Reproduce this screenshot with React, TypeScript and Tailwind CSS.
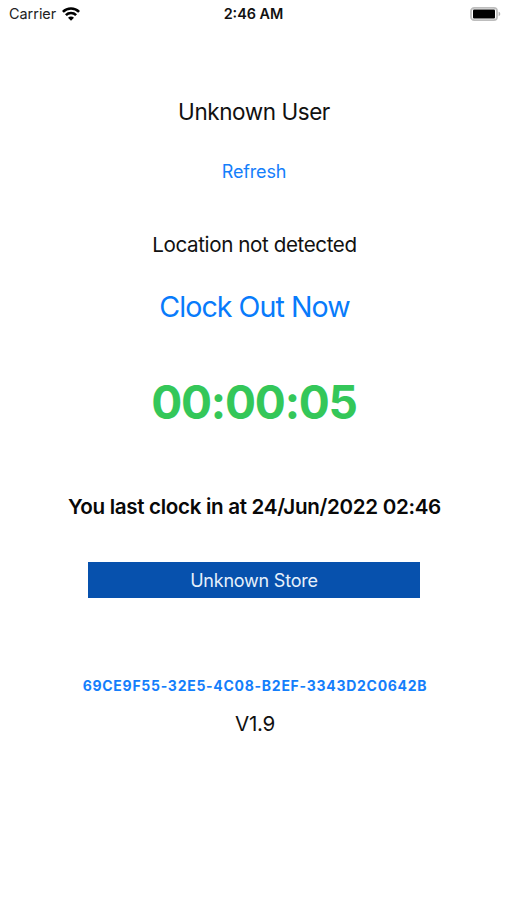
const LAST_CLOCK_IN = "24/Jun/2022 02:46";
const DEVICE_ID = "69CE9F55-32E5-4C08-B2EF-3343D2C0642B";

function WifiIcon() {
  return (
    <svg width="18" height="14" viewBox="0 0 18 14" fill="none" stroke="#000" strokeWidth="2.6">
      <path d="M0.9 4.9C5.4 0.4 12.6 0.4 17.1 4.9" />
      <path d="M3.9 8.1C6.7 5.3 11.3 5.3 14.1 8.1" />
      <path d="M9 13.8L6 10.8C7.7 9.1 10.3 9.1 12 10.8Z" fill="#000" stroke="none" />
    </svg>
  );
}

function BatteryIcon() {
  return (
    <svg width="31" height="14" viewBox="0 0 31 14" fill="none">
      <rect x="1" y="0.9" width="26" height="12.2" rx="3.2" stroke="#bdbdbd" strokeWidth="1.8" />
      <rect x="3" y="2.6" width="22" height="8.8" rx="1" fill="#000" />
      <path d="M28.6 4.8C30.8 5.4 30.8 8.6 28.6 9.2Z" fill="#b3b3b3" />
    </svg>
  );
}

function StatusBar() {
  return (
    <div className="grid h-7 grid-cols-3 items-center pr-1.5 pl-[9px] text-[14.4px] leading-7 text-[#222]">
      <div className="flex items-center gap-1.5">
        <span>Carrier</span>
        <WifiIcon />
      </div>
      <div className="pr-[3px] text-center font-semibold text-[#111]">2:46 AM</div>
      <div className="flex justify-end">
        <BatteryIcon />
      </div>
    </div>
  );
}

export default function App() {
  return (
    <div className="h-[900px] w-full overflow-hidden bg-white font-['Inter','Liberation_Sans',sans-serif] whitespace-nowrap text-[#111]">
      <StatusBar />

      <main className="flex flex-col items-center pl-px">
        <h1 className="mt-[68px] text-[22.5px] leading-8 tracking-[-0.43px]">Unknown User</h1>
        <button className="mt-8 text-[18px] leading-6 tracking-[-0.15px] text-[#147efb]">Refresh</button>

        <p className="mt-[45px] pl-px text-[20.6px] leading-8 tracking-[-0.4px]">Location not detected</p>
        <button className="mt-[26px] pl-px text-[28.6px] leading-10 tracking-[-0.95px] text-[#087bfb]">
          Clock Out Now
        </button>

        <div className="mt-[45px] text-[46px] leading-[60px] font-bold tracking-[-1.2px] text-[#34c759]">
          00:00:05
        </div>

        <p className="mt-[59px] pl-px text-[20.6px] leading-8 font-semibold tracking-[-0.32px] text-[#080808]">
          You last clock in at {LAST_CLOCK_IN}
        </p>

        <button className="mt-[39px] h-9 w-[332px] bg-[#0751ad] text-[18px] tracking-[-0.22px] text-[#e6f0fb]">
          Unknown Store
        </button>

        <div className="mt-[76px] pl-0.5 text-[14px] leading-6 font-bold tracking-[0.72px] text-[#147efb]">
          {DEVICE_ID}
        </div>
        <p className="mt-2.5 pl-0.5 text-[20.6px] leading-8 tracking-[-0.3px]">V1.9</p>
      </main>
    </div>
  );
}
